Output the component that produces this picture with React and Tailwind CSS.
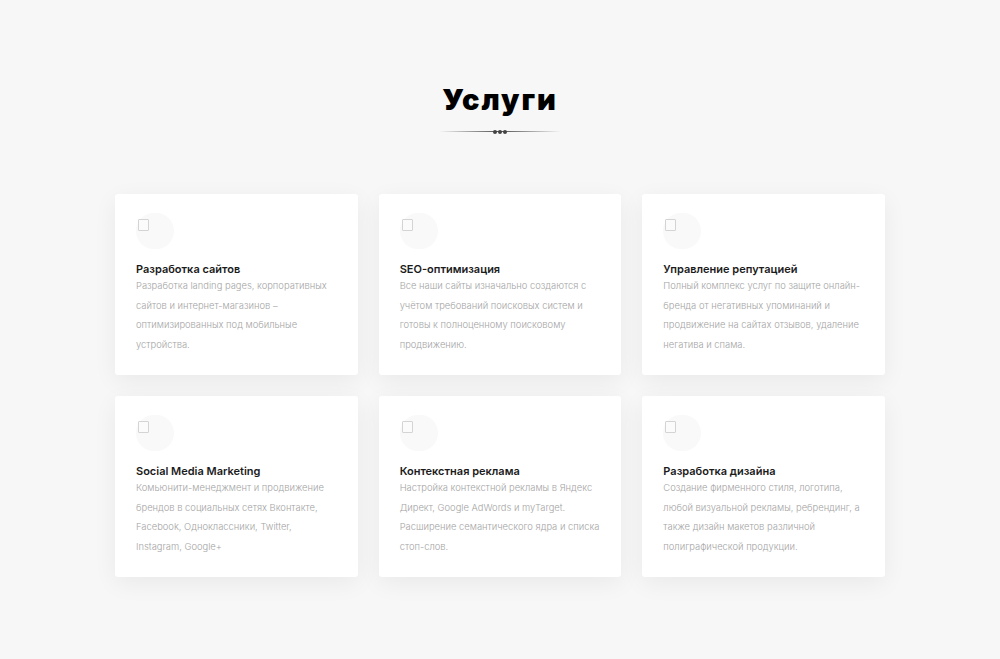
import React from "react";

const services = [
  {
    title: "Разработка сайтов",
    lines: [
      "Разработка landing pages, корпоративных",
      "сайтов и интернет-магазинов –",
      "оптимизированных под мобильные",
      "устройства.",
    ],
  },
  {
    title: "SEO-оптимизация",
    lines: [
      "Все наши сайты изначально создаются с",
      "учётом требований поисковых систем и",
      "готовы к полноценному поисковому",
      "продвижению.",
    ],
  },
  {
    title: "Управление репутацией",
    lines: [
      "Полный комплекс услуг по защите онлайн-",
      "бренда от негативных упоминаний и",
      "продвижение на сайтах отзывов, удаление",
      "негатива и спама.",
    ],
  },
  {
    title: "Social Media Marketing",
    lines: [
      "Комьюнити-менеджмент и продвижение",
      "брендов в социальных сетях Вконтакте,",
      "Facebook, Одноклассники, Twitter,",
      "Instagram, Google+",
    ],
  },
  {
    title: "Контекстная реклама",
    lines: [
      "Настройка контекстной рекламы в Яндекс",
      "Директ, Google AdWords и myTarget.",
      "Расширение семантического ядра и списка",
      "стоп-слов.",
    ],
  },
  {
    title: "Разработка дизайна",
    lines: [
      "Создание фирменного стиля, логотипа,",
      "любой визуальной рекламы, ребрендинг, а",
      "также дизайн макетов различной",
      "полиграфической продукции.",
    ],
  },
];

function Card({ title, lines }) {
  return (
    <div className="bg-white rounded-[3px] shadow-[0_6px_24px_rgba(0,0,0,0.06)] px-[21px] pt-[19px] pb-[21px] h-[181px]">
      <div className="relative h-[36px] w-[38px]">
        <div className="absolute left-0 top-0 w-[38px] h-[36px] rounded-full bg-[#f9f9f9]" />
        <div className="absolute left-[2px] top-[6px] w-[11px] h-[12px] border border-[#d4d4d4] rounded-[1px] bg-white/40" />
      </div>
      <div
        className="mt-[13px] text-[11px] leading-[14px] font-semibold text-[#1b1b1b]"
        style={{ fontFamily: "Inter, 'Noto Sans', sans-serif" }}
      >
        {title}
      </div>
      <div
        className="text-[9.4px] leading-[19.5px] font-light text-[#a4a4a4] whitespace-nowrap"
        style={{ fontFamily: "Inter, 'Noto Sans', sans-serif" }}
      >
        {lines.map((l, i) => (
          <div key={i}>{l}</div>
        ))}
      </div>
    </div>
  );
}

export default function App() {
  return (
    <div className="min-h-[659px] w-full bg-[#f7f7f7] flex flex-col items-center">
      <h1
        className="mt-[84px] text-[29px] leading-[32px] font-black text-black tracking-[2px]"
        style={{ fontFamily: "Inter, 'Liberation Sans', sans-serif" }}
      >
        Услуги
      </h1>
      <div className="mt-[13px] relative w-[122px] h-[5px] flex items-center justify-center">
        <div className="absolute left-0 right-0 top-[2px] h-[1px] bg-[linear-gradient(to_right,rgba(60,60,60,0),rgba(60,60,60,0.9)_50%,rgba(60,60,60,0))]" />
        <div className="relative flex gap-[1px]">
          <span className="block w-[4px] h-[4px] rounded-full bg-[#444]" />
          <span className="block w-[4px] h-[4px] rounded-full bg-[#444]" />
          <span className="block w-[4px] h-[4px] rounded-full bg-[#444]" />
        </div>
      </div>
      <div className="mt-[60px] w-[770px] grid grid-cols-3 gap-[21px]">
        {services.map((s, i) => (
          <Card key={i} {...s} />
        ))}
      </div>
    </div>
  );
}
